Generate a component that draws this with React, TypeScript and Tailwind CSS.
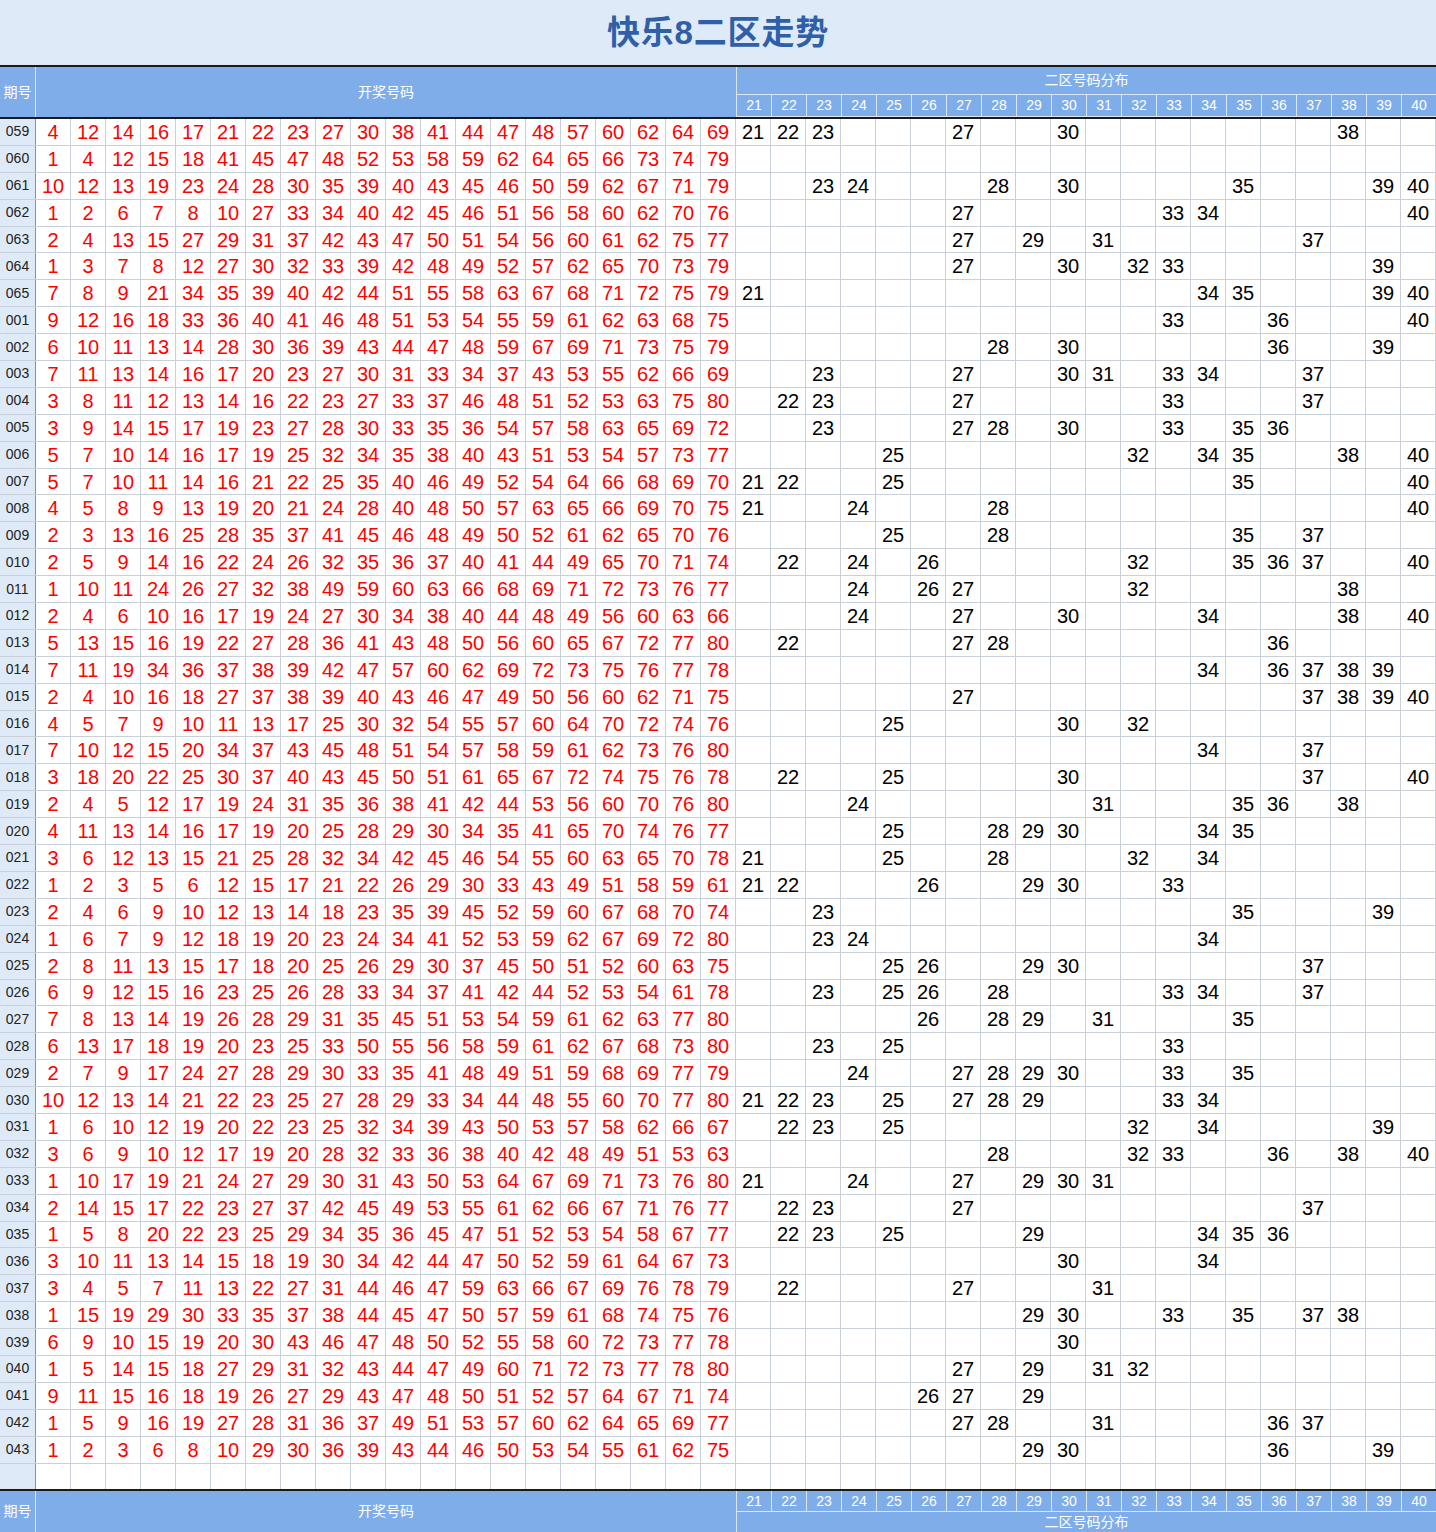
const raw = `059:4 12 14 16 17 21 22 23 27 30 38 41 44 47 48 57 60 62 64 69
060:1 4 12 15 18 41 45 47 48 52 53 58 59 62 64 65 66 73 74 79
061:10 12 13 19 23 24 28 30 35 39 40 43 45 46 50 59 62 67 71 79
062:1 2 6 7 8 10 27 33 34 40 42 45 46 51 56 58 60 62 70 76
063:2 4 13 15 27 29 31 37 42 43 47 50 51 54 56 60 61 62 75 77
064:1 3 7 8 12 27 30 32 33 39 42 48 49 52 57 62 65 70 73 79
065:7 8 9 21 34 35 39 40 42 44 51 55 58 63 67 68 71 72 75 79
001:9 12 16 18 33 36 40 41 46 48 51 53 54 55 59 61 62 63 68 75
002:6 10 11 13 14 28 30 36 39 43 44 47 48 59 67 69 71 73 75 79
003:7 11 13 14 16 17 20 23 27 30 31 33 34 37 43 53 55 62 66 69
004:3 8 11 12 13 14 16 22 23 27 33 37 46 48 51 52 53 63 75 80
005:3 9 14 15 17 19 23 27 28 30 33 35 36 54 57 58 63 65 69 72
006:5 7 10 14 16 17 19 25 32 34 35 38 40 43 51 53 54 57 73 77
007:5 7 10 11 14 16 21 22 25 35 40 46 49 52 54 64 66 68 69 70
008:4 5 8 9 13 19 20 21 24 28 40 48 50 57 63 65 66 69 70 75
009:2 3 13 16 25 28 35 37 41 45 46 48 49 50 52 61 62 65 70 76
010:2 5 9 14 16 22 24 26 32 35 36 37 40 41 44 49 65 70 71 74
011:1 10 11 24 26 27 32 38 49 59 60 63 66 68 69 71 72 73 76 77
012:2 4 6 10 16 17 19 24 27 30 34 38 40 44 48 49 56 60 63 66
013:5 13 15 16 19 22 27 28 36 41 43 48 50 56 60 65 67 72 77 80
014:7 11 19 34 36 37 38 39 42 47 57 60 62 69 72 73 75 76 77 78
015:2 4 10 16 18 27 37 38 39 40 43 46 47 49 50 56 60 62 71 75
016:4 5 7 9 10 11 13 17 25 30 32 54 55 57 60 64 70 72 74 76
017:7 10 12 15 20 34 37 43 45 48 51 54 57 58 59 61 62 73 76 80
018:3 18 20 22 25 30 37 40 43 45 50 51 61 65 67 72 74 75 76 78
019:2 4 5 12 17 19 24 31 35 36 38 41 42 44 53 56 60 70 76 80
020:4 11 13 14 16 17 19 20 25 28 29 30 34 35 41 65 70 74 76 77
021:3 6 12 13 15 21 25 28 32 34 42 45 46 54 55 60 63 65 70 78
022:1 2 3 5 6 12 15 17 21 22 26 29 30 33 43 49 51 58 59 61
023:2 4 6 9 10 12 13 14 18 23 35 39 45 52 59 60 67 68 70 74
024:1 6 7 9 12 18 19 20 23 24 34 41 52 53 59 62 67 69 72 80
025:2 8 11 13 15 17 18 20 25 26 29 30 37 45 50 51 52 60 63 75
026:6 9 12 15 16 23 25 26 28 33 34 37 41 42 44 52 53 54 61 78
027:7 8 13 14 19 26 28 29 31 35 45 51 53 54 59 61 62 63 77 80
028:6 13 17 18 19 20 23 25 33 50 55 56 58 59 61 62 67 68 73 80
029:2 7 9 17 24 27 28 29 30 33 35 41 48 49 51 59 68 69 77 79
030:10 12 13 14 21 22 23 25 27 28 29 33 34 44 48 55 60 70 77 80
031:1 6 10 12 19 20 22 23 25 32 34 39 43 50 53 57 58 62 66 67
032:3 6 9 10 12 17 19 20 28 32 33 36 38 40 42 48 49 51 53 63
033:1 10 17 19 21 24 27 29 30 31 43 50 53 64 67 69 71 73 76 80
034:2 14 15 17 22 23 27 37 42 45 49 53 55 61 62 66 67 71 76 77
035:1 5 8 20 22 23 25 29 34 35 36 45 47 51 52 53 54 58 67 77
036:3 10 11 13 14 15 18 19 30 34 42 44 47 50 52 59 61 64 67 73
037:3 4 5 7 11 13 22 27 31 44 46 47 59 63 66 67 69 76 78 79
038:1 15 19 29 30 33 35 37 38 44 45 47 50 57 59 61 68 74 75 76
039:6 9 10 15 19 20 30 43 46 47 48 50 52 55 58 60 72 73 77 78
040:1 5 14 15 18 27 29 31 32 43 44 47 49 60 71 72 73 77 78 80
041:9 11 15 16 18 19 26 27 29 43 47 48 50 51 52 57 64 67 71 74
042:1 5 9 16 19 27 28 31 36 37 49 51 53 57 60 62 64 65 69 77
043:1 2 3 6 8 10 29 30 36 39 43 44 46 50 53 54 55 61 62 75`;

const rows = raw.split('\n').map((line) => {
  const [id, nums] = line.split(':');
  return { id, nums: nums.split(' ').map(Number) };
});

const zone = Array.from({ length: 20 }, (_, i) => 21 + i);

const font = { fontFamily: '"Liberation Sans", "Noto Sans CJK SC", sans-serif' };

function ZoneHeads({ top }: { top?: boolean }) {
  return (
    <div className={`flex ${top ? 'h-[20px]' : 'h-[22px]'}`}>
      {zone.map((z) => (
        <div
          key={z}
          className={`w-[35px] shrink-0 flex items-center justify-center text-[14px] text-white border-l border-[#dbe7f7] ${top ? '' : 'border-b'}`}
        >
          {z}
        </div>
      ))}
    </div>
  );
}

export default function App() {
  return (
    <div className="w-[1436px] h-[1532px] bg-white flex flex-col overflow-hidden" style={font}>
      {/* 标题 */}
      <div className="h-[67px] shrink-0 bg-[#dfeaf8] border-b-2 border-[#1a1a1a] flex items-center justify-center">
        <h1 className="text-[33px] font-bold text-[#2f5fa7] tracking-wide">快乐8二区走势</h1>
      </div>

      {/* 表头 */}
      <div className="flex h-[52px] shrink-0 bg-[#7fadea] border-b-2 border-[#1a1a1a]">
        <div className="w-[36px] shrink-0 flex items-center justify-center text-[14px] text-white border-r border-[#dbe7f7]">期号</div>
        <div className="w-[700px] shrink-0 flex items-center justify-center text-[14px] text-white">开奖号码</div>
        <div className="flex flex-col">
          <div className="h-[28px] flex items-center justify-center text-[14px] text-white border-l border-[#dbe7f7] border-b">二区号码分布</div>
          <ZoneHeads />
        </div>
      </div>

      {/* 数据 */}
      {rows.map((r) => (
        <div key={r.id} className="flex h-[26.9px] shrink-0 border-b border-[#c9d0d7]">
          <div className="w-[36px] shrink-0 bg-[#dfeaf8] border-r border-[#8a9099] flex items-center justify-center text-[14px] text-[#222]">
            {r.id}
          </div>
          {r.nums.map((n, i) => (
            <div key={i} className="w-[35px] shrink-0 border-r border-[#c9d0d7] flex items-center justify-center text-[20px] text-[#ff0000]">
              {n}
            </div>
          ))}
          {zone.map((z) => (
            <div key={z} className="w-[35px] shrink-0 border-r border-[#c9d0d7] flex items-center justify-center text-[20px] text-black">
              {r.nums.includes(z) ? z : ''}
            </div>
          ))}
        </div>
      ))}
      <div className="flex flex-1">
        <div className="w-[36px] shrink-0 bg-[#dfeaf8] border-r border-[#8a9099]" />
        {Array.from({ length: 40 }, (_, i) => (
          <div key={i} className="w-[35px] shrink-0 border-r border-[#c9d0d7]" />
        ))}
      </div>

      {/* 表尾 */}
      <div className="flex h-[43px] shrink-0 bg-[#7fadea] border-t-2 border-[#1a1a1a]">
        <div className="w-[36px] shrink-0 flex items-center justify-center text-[14px] text-white border-r border-[#dbe7f7]">期号</div>
        <div className="w-[700px] shrink-0 flex items-center justify-center text-[14px] text-white">开奖号码</div>
        <div className="flex flex-col">
          <ZoneHeads top />
          <div className="h-[21px] flex items-center justify-center text-[14px] text-white border-l border-[#dbe7f7] border-t">二区号码分布</div>
        </div>
      </div>
    </div>
  );
}
